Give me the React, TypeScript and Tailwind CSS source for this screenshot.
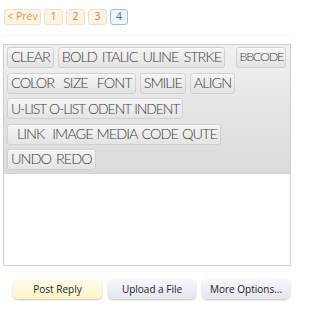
import React from 'react'

const pages = ['1', '2', '3']

type G = { words: string[]; wide?: boolean; lead?: boolean; tight?: boolean; small?: boolean }

const rows: { groups: G[]; right?: G }[] = [
  { groups: [{ words: ['CLEAR'] }, { words: ['BOLD', 'ITALIC', 'ULINE', 'STRKE'] }], right: { words: ['BBCODE'], small: true } },
  { groups: [{ words: ['COLOR', 'SIZE', 'FONT'], wide: true }, { words: ['SMILIE'] }, { words: ['ALIGN'] }] },
  { groups: [{ words: ['U-LIST', 'O-LIST', 'ODENT', 'INDENT'], tight: true }] },
  { groups: [{ words: ['LINK', 'IMAGE', 'MEDIA', 'CODE', 'QUTE'], lead: true }] },
  { groups: [{ words: ['UNDO', 'REDO'] }] },
]

// One bordered button group of the editor toolbar; words sit side by side inside it.
function Group({ words, wide, lead, tight, small }: G) {
  const size = small
    ? 'text-[12.5px] tracking-[-1.2px] gap-[5px] pr-[2px]'
    : tight
      ? 'text-[14px] tracking-[-1.1px] gap-[3px] pr-[3px]'
      : wide
        ? 'text-[14.5px] tracking-[-1px] gap-[9px] pr-[3px]'
        : lead
          ? 'text-[14.5px] tracking-[-1px] gap-[4px] pr-[3px]'
          : 'text-[14.5px] tracking-[-1px] gap-[5px] pr-[3px]'
  return (
    <div
      className={`flex h-[21px] items-center rounded-[3px] border border-[#d0d0d0] bg-gradient-to-b from-[#f4f4f4] to-[#e4e4e4] leading-none text-[#404040] shadow-[inset_0_1px_0_#fff] ${size} ${lead ? 'pl-[9px]' : small ? 'pl-[2px]' : 'pl-[3px]'}`}
    >
      {words.map((w, i) => (
        <span key={w} className={lead && i === 0 ? 'mr-[4px]' : ''}>
          {w}
        </span>
      ))}
    </div>
  )
}

export default function App() {
  return (
    <div className="h-[319px] w-[300px] bg-white" style={{ fontFamily: '"Open Sans", "Noto Sans", sans-serif' }}>
      <div className="flex gap-[3px] pl-[4px] pt-[9px]">
        <span className="flex h-[16px] w-[37px] items-center justify-center rounded-[3px] border border-[#f1dfc4] bg-[#fdf3e3] text-[10.5px] text-[#c99a5b]">
          &lt; Prev
        </span>
        {pages.map((p) => (
          <span
            key={p}
            className="flex h-[16px] w-[19px] items-center justify-center rounded-[3px] border border-[#f1dfc4] bg-[#fdf3e3] text-[10.5px] text-[#b08a5a]"
          >
            {p}
          </span>
        ))}
        <span className="flex h-[16px] w-[18px] items-center justify-center rounded-[3px] border border-[#9cc3dd] bg-[#eef6fc] text-[10.5px] text-[#47708f]">
          4
        </span>
      </div>
      <div className="ml-[4px] mt-[10px] h-px w-[286px] bg-[#eef1f6]" />
      <div className="ml-[3px] mt-[8px] w-[288px] border border-[#cfcfcf]">
        <div
          className="flex flex-col gap-[4.5px] bg-gradient-to-b from-[#f1f1f1] to-[#dadada] px-[3px] pb-[3px] pt-[2px]"
          style={{ fontFamily: 'Lato, "DejaVu Sans", sans-serif', fontWeight: 300 }}
        >
          {rows.map((r, i) => (
            <div key={i} className="flex gap-[4px]">
              {r.groups.map((g, j) => (
                <Group key={j} {...g} />
              ))}
              {r.right && (
                <div className="ml-auto pr-[1px]">
                  <Group {...r.right} />
                </div>
              )}
            </div>
          ))}
        </div>
        <div className="h-[92px] border-t border-[#d6d6d6] bg-white" />
      </div>
      <div className="mt-[13px] flex gap-[6px] pl-[13px]">
        <button className="h-[20px] w-[89px] rounded-[5px] bg-gradient-to-b from-[#fefde9] to-[#fbf6c8] text-[10px] text-[#222] shadow-[0_1px_2px_rgba(0,0,0,0.25)]">
          Post Reply
        </button>
        <button className="h-[20px] w-[88px] rounded-[5px] bg-gradient-to-b from-[#f8f8fc] to-[#e3e4ee] text-[10px] text-[#222] shadow-[0_1px_2px_rgba(0,0,0,0.25)]">
          Upload a File
        </button>
        <button className="h-[20px] w-[88px] rounded-[5px] bg-gradient-to-b from-[#f8f8fc] to-[#e3e4ee] text-[10px] text-[#222] shadow-[0_1px_2px_rgba(0,0,0,0.25)]">
          More Options...
        </button>
      </div>
    </div>
  )
}
